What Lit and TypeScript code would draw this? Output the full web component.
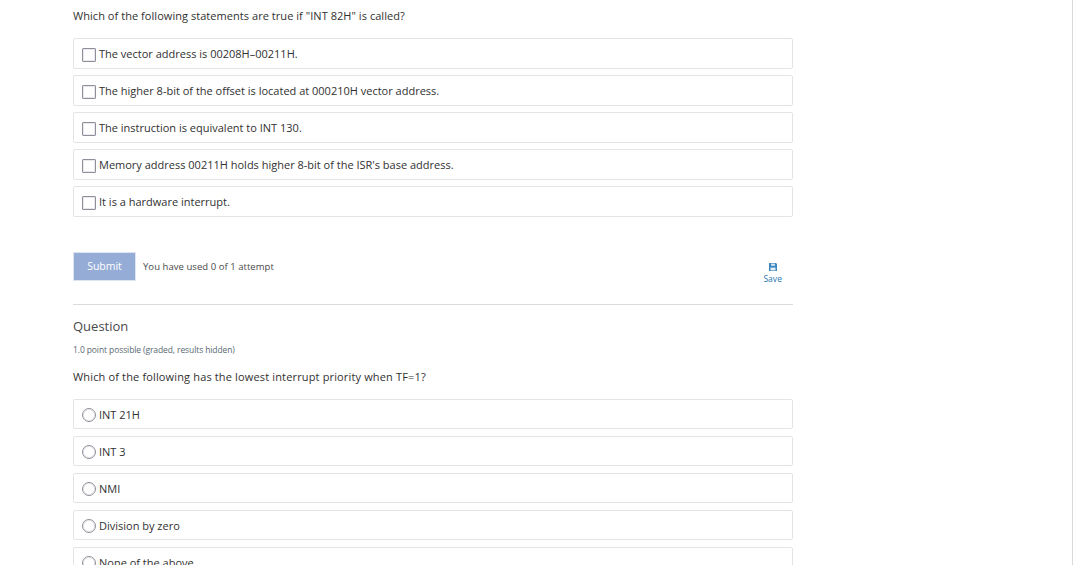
import { LitElement, css, html, svg } from "lit";
import { customElement } from "lit/decorators.js";

const checkOptions = [
  "The vector address is 00208H\u201300211H.",
  "The higher 8-bit of the offset is located at 000210H vector address.",
  "The instruction is equivalent to INT 130.",
  "Memory address 00211H holds higher 8-bit of the ISR's base address.",
  "It is a hardware interrupt.",
];

const radioOptions = ["INT 21H", "INT 3", "NMI", "Division by zero", "None of the above"];

const saveIcon = svg`<svg class="save-icon" viewBox="0 0 10 10" width="10" height="10">
  <path fill="#3a86bf" d="M1 1h7l1 1v7H1z"/>
  <rect x="3" y="1.6" width="4" height="2.2" fill="#cfe3f1"/>
  <rect x="2.5" y="5.6" width="5" height="2.8" fill="#e3eff7"/>
</svg>`;

@customElement("app-root")
export class AppRoot extends LitElement {
  static styles = css`
    :host {
      display: block;
      height: 565px;
      overflow: hidden;
      background: #fff;
      font-family: "Open Sans", "Noto Sans", sans-serif;
      font-size: 11px;
      letter-spacing: 0.05px;
      color: #313131;
    }

    .page {
      box-sizing: border-box;
      width: 1073px;
      height: 565px;
      padding: 0 0 0 73px;
      border-right: 1px solid #d9d9d9;
      overflow: hidden;
    }

    .content {
      width: 720px;
    }

    .prompt {
      margin: 0;
      height: 16px;
      line-height: 16px;
    }

    .first {
      margin-top: 8px;
    }

    .options {
      display: flex;
      flex-direction: column;
      gap: 6px;
      margin-top: 14px;
      letter-spacing: 0;
    }

    .options.radios {
      gap: 7px;
    }

    .option {
      box-sizing: border-box;
      display: flex;
      align-items: center;
      gap: 3px;
      height: 31px;
      padding-left: 8px;
      border: 1px solid #e4e4e4;
      border-radius: 2px;
    }

    .radios .option {
      height: 30px;
    }

    .box {
      box-sizing: border-box;
      width: 14px;
      height: 14px;
      margin-top: 2px;
      border: 1px solid #8f8f9b;
      box-shadow: inset 0 0 0 1px rgba(143, 143, 155, 0.2);
      border-radius: 1px;
      flex: none;
    }

    .radios .box {
      border-radius: 50%;
    }

    .actions {
      display: flex;
      align-items: center;
      margin-top: 35px;
      height: 29px;
    }

    .submit {
      box-sizing: border-box;
      width: 63px;
      height: 29px;
      border: 1px solid #dfe5f0;
      background: #94acd6;
      color: #fff;
      font: inherit;
      font-size: 10.5px;
      padding: 0 0 2px;
    }

    .attempts {
      margin-left: 7px;
      margin-bottom: 1px;
      font-size: 9.5px;
      color: #4a4a4a;
    }

    .save {
      margin-left: auto;
      margin-right: 11px;
      margin-top: 12px;
      display: flex;
      flex-direction: column;
      align-items: center;
      color: #1f78b4;
      font-size: 8.5px;
      line-height: 11px;
    }

    .save-icon {
      margin-bottom: 1px;
    }

    .divider {
      border: 0;
      border-top: 1px solid #dcdcdc;
      margin: 23px 0 0;
    }

    .title {
      margin: 12px 0 0;
      font-size: 13px;
      font-weight: 400;
      letter-spacing: 0;
      line-height: 18px;
      color: #4a4a4a;
    }

    .points {
      margin: 9px 0 0;
      font-size: 8.5px;
      letter-spacing: -0.1px;
      line-height: 12px;
      color: #5a6a72;
    }

    .second {
      margin-top: 13px;
      letter-spacing: 0.15px;
    }
  `;

  optionList(items: string[], radios: boolean) {
    return html`<div class="options ${radios ? "radios" : ""}">
      ${items.map(
        (text) => html`<div class="option"><span class="box"></span><span>${text}</span></div>`
      )}
    </div>`;
  }

  render() {
    return html`
      <div class="page">
        <div class="content">
          <p class="prompt first">Which of the following statements are true if "INT 82H" is called?</p>
          ${this.optionList(checkOptions, false)}
          <div class="actions">
            <button class="submit" type="button">Submit</button>
            <span class="attempts">You have used 0 of 1 attempt</span>
            <span class="save">${saveIcon}Save</span>
          </div>
          <hr class="divider" />
          <h3 class="title">Question</h3>
          <p class="points">1.0 point possible (graded, results hidden)</p>
          <p class="prompt second">Which of the following has the lowest interrupt priority when TF=1?</p>
          ${this.optionList(radioOptions, true)}
        </div>
      </div>
    `;
  }
}
